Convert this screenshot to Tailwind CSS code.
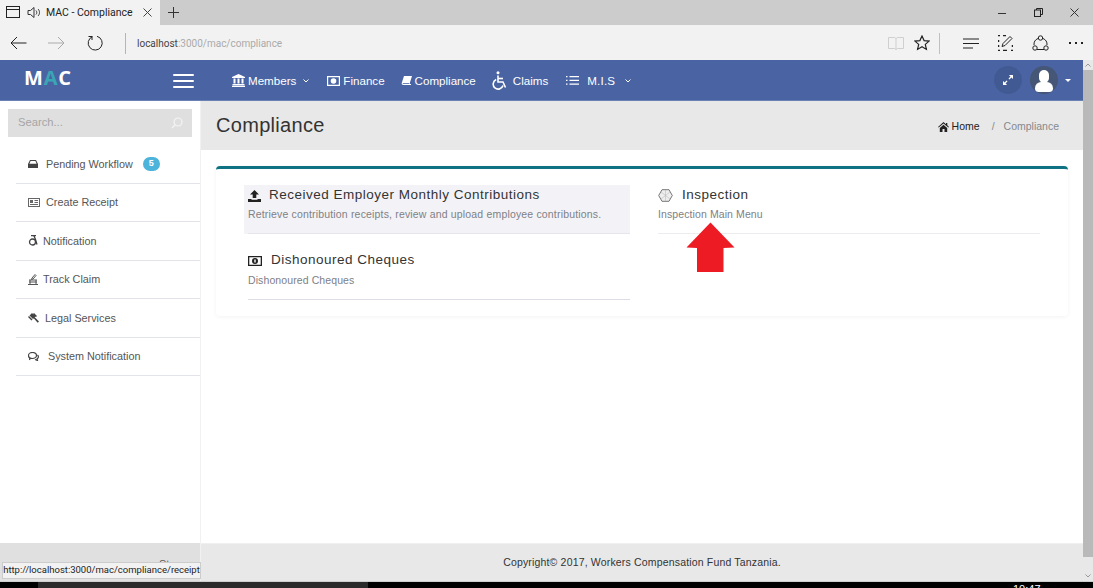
<!DOCTYPE html>
<html>
<head>
<meta charset="utf-8">
<title>MAC - Compliance</title>
<script src="https://cdn.jsdelivr.net/npm/@tailwindcss/browser@4"></script>
</head>
<body class="w-[1093px] h-[588px] overflow-hidden bg-white font-['Liberation_Sans',Arial,sans-serif]">
<div class="relative flex flex-col h-[588px]">

  <!-- Browser tabs -->
  <div class="flex h-[25px] bg-[#cccccc] shrink-0">
    <div class="flex items-center w-[160px] bg-[#f2f2f2] pl-[6px]">
      <svg class="w-[15px] h-[13px]" viewBox="0 0 15 13" fill="none" stroke="#222"><rect x="0.5" y="0.5" width="13" height="11"/><path d="M1 3.5h12"/></svg>
      <svg class="w-[15px] h-[13px] ml-[6px]" viewBox="0 0 15 13" fill="none" stroke="#333"><path d="M1 4.5h2.500L7 1.500v10L3.500 8.500H1z"/><path d="M9 4.500c1 1 1 3 0 4M11 3c2 2 2 5 0 7"/></svg>
      <span class="ml-[4px] mt-[1px] text-[10.500px] text-[#222] font-['Roboto',sans-serif] whitespace-nowrap">MAC - Compliance</span>
      <svg class="w-[9px] h-[9px] ml-auto mr-[8px]" viewBox="0 0 9 9" stroke="#444"><path d="M0.500 0.500l8 8M8.500 0.500l-8 8"/></svg>
    </div>
    <div class="w-[26px] flex items-center justify-center">
      <svg class="w-[11px] h-[11px]" viewBox="0 0 11 11" stroke="#333"><path d="M5.500 0v11M0 5.500h11"/></svg>
    </div>
    <div class="ml-auto flex items-center">
      <div class="w-[36px] flex justify-center"><svg class="w-[8px] h-[8px]" viewBox="0 0 8 8" stroke="#333"><path d="M0 4.500h8"/></svg></div>
      <div class="w-[36px] flex justify-center"><svg class="w-[9px] h-[9px]" viewBox="0 0 9 9" fill="none" stroke="#222"><rect x="0.500" y="2" width="6" height="6.500"/><path d="M2.500 2V0.500h6V6.500H6.500"/></svg></div>
      <div class="w-[37px] flex justify-center"><svg class="w-[9px] h-[9px]" viewBox="0 0 9 9" stroke="#333"><path d="M0.500 0.500l8 8M8.500 0.500l-8 8"/></svg></div>
    </div>
  </div>

  <!-- Browser toolbar -->
  <div class="flex items-center h-[35px] pt-[1px] bg-[#f2f2f2] shrink-0 pl-[10px]">
    <svg class="w-[17px] h-[14px]" viewBox="0 0 17 14" fill="none" stroke="#222"><path d="M16.500 7H1M7 1L1 7l6 6"/></svg>
    <svg class="w-[17px] h-[14px] ml-[21px]" viewBox="0 0 17 14" fill="none" stroke="#aaa"><path d="M0 7h15.500M10 1l6 6-6 6"/></svg>
    <svg class="w-[16px] h-[16px] ml-[22px]" viewBox="0 0 16 16" fill="none" stroke="#222"><path d="M5.500 1.600A7 7 0 1 0 10 1.300"/><path d="M5 5V1.500H1.500"/></svg>
    <div class="w-px h-[21px] bg-[#b5b5b5] ml-[22px]"></div>
    <div class="ml-[11px] mt-[1px] text-[10px] font-['Roboto',sans-serif] text-[#aaaaaa] whitespace-nowrap"><span class="text-[#444]">localhost</span>:3000/mac/compliance</div>
    <div class="ml-auto flex items-center">
      <svg class="w-[16px] h-[14px]" viewBox="0 0 16 14" fill="none" stroke="#cfcfcf"><path d="M0.500 1.500h6L8 2.500l1.500-1h6v11h-6L8 13.500l-1.500-1h-6zM8 2.500v11"/></svg>
      <svg class="w-[16px] h-[16px] ml-[10px]" viewBox="0 0 16 16" fill="none" stroke="#222" stroke-width="1.200"><path d="M8 1l2.100 4.600 5 .5-3.800 3.300 1.100 5L8 11.800l-4.400 2.600 1.100-5L.9 6.100l5-.5z"/></svg>
      <div class="w-px h-[21px] bg-[#c0c0c0] ml-[9px]"></div>
      <svg class="w-[16px] h-[11px] ml-[23px]" viewBox="0 0 16 11" stroke="#222"><path d="M0 1h16M0 5.500h16M0 10h10"/></svg>
      <svg class="w-[15px] h-[16px] ml-[19px]" viewBox="0 0 15 16" fill="none" stroke="#222"><path d="M0 .5h2M0 15.500h2M13 15.500h2M.5 5v2M.5 10v2M5 .5h3M5 15.500h4M14.500 10v2" stroke-width="1.500"/><path d="M4 11.500l1-3 7-7 2 2-7 7z"/></svg>
      <svg class="w-[17px] h-[17px] ml-[19px]" viewBox="0 0 17 17" fill="none" stroke="#222"><path d="M6 3.500A6.500 6.500 0 0 0 2 10M11 3.500A6.500 6.500 0 0 1 15 10M5 14.500h7"/><circle cx="8.500" cy="3" r="2.200"/><circle cx="3" cy="13" r="2.200"/><circle cx="14" cy="13" r="2.200"/></svg>
      <div class="flex gap-[4px] ml-[20px] mr-[10px]"><i class="w-[2px] h-[2px] bg-[#222]"></i><i class="w-[2px] h-[2px] bg-[#222]"></i><i class="w-[2px] h-[2px] bg-[#222]"></i></div>
    </div>
  </div>

  <!-- App area + scrollbar -->
  <div class="flex flex-1 min-h-0">
    <div class="flex flex-col w-[1083px] min-h-0">

      <!-- Top nav -->
      <header class="flex items-center h-[41px] bg-[#4a64a3] border-b border-[#6a81b5] shrink-0 text-white text-[11.600px]">
        <div class="w-[173px] pl-[24px] text-[20px] font-bold font-['Open_Sans',sans-serif] tracking-[0.8px] leading-none -mt-[4px]">M<span class="text-[#3aa6b4]">A</span>C</div>
        <div class="flex flex-col gap-[3.500px] w-[21px] mt-[2px]"><i class="h-[2.500px] bg-white rounded-sm"></i><i class="h-[2.500px] bg-white rounded-sm"></i><i class="h-[2.500px] bg-white rounded-sm"></i></div>
        <nav class="flex items-center ml-[38px] pt-[1px]">
          <svg class="w-[13px] h-[13px]" viewBox="0 0 13 13" fill="#fff"><path d="M6.500 0L13 3v1H0V3z"/><path d="M1.500 4.500h2v5h-2zM5.500 4.500h2v5h-2zM9.500 4.500h2v5h-2zM0.500 10h12v1.200H0.500zM0 11.700h13V13H0z"/></svg>
          <span class="ml-[3px]">Members</span>
          <svg class="w-[6px] h-[4px] ml-[7px]" viewBox="0 0 6 4" fill="none" stroke="#fff"><path d="M0.500 0.500L3 3l2.500-2.500"/></svg>
          <svg class="w-[13px] h-[10px] ml-[18px]" viewBox="0 0 13 10" fill="#fff"><path fill-rule="evenodd" d="M0 0h13v10H0zM1.200 1.200v7.600h10.600V1.200z"/><circle cx="6.500" cy="5" r="2.800"/></svg>
          <span class="ml-[3px]">Finance</span>
          <svg class="w-[11px] h-[10px] ml-[16px]" viewBox="0 0 11 10" fill="#fff"><path d="M3 0h8L8.500 8H10v1H2.500C1 9 .3 8 .8 6.800z"/><path d="M1.800 7.500H8" stroke="#4a64a3" stroke-width="0.800"/></svg>
          <span class="ml-[3px]">Compliance</span>
          <svg class="w-[16px] h-[19px] ml-[16px]" viewBox="0 0 16 19" fill="none" stroke="#fff" stroke-width="1.600"><circle cx="6" cy="1.800" r="1.500" fill="#fff" stroke="none"/><path d="M6 4.500v6.500h5l2.500 5.500"/><path d="M6 7.500h5"/><path d="M4.200 8.500a5 5 0 1 0 6.800 6"/></svg>
          <span class="ml-[5px]">Claims</span>
          <svg class="w-[13px] h-[9px] ml-[18px]" viewBox="0 0 13 9" fill="#fff"><path d="M0 0h1.500v1.200H0zM0 3.800h1.500V5H0zM0 7.600h1.500v1.200H0zM3.500 0H13v1.200H3.500zM3.500 3.800H13V5H3.500zM3.500 7.600H13v1.200H3.500z"/></svg>
          <span class="ml-[8px] tracking-[0.2px]">M.I.S</span>
          <svg class="w-[6px] h-[4px] ml-[10px]" viewBox="0 0 6 4" fill="none" stroke="#fff"><path d="M0.500 0.500L3 3l2.500-2.500"/></svg>
        </nav>
        <div class="ml-auto flex items-center pr-[12px]">
          <div class="flex items-center justify-center w-[28px] h-[28px] rounded-full bg-[#425a94]">
            <svg class="w-[10px] h-[10px]" viewBox="0 0 11 11" fill="#fff"><path d="M6.500 0H11v4.500L9.300 2.800 7 5 6 4l2.200-2.300zM4.500 11H0V6.500l1.700 1.700L4 6l1 1-2.200 2.300z"/></svg>
          </div>
          <div class="relative w-[28px] h-[28px] rounded-full bg-[#465677] ml-[8px] overflow-hidden">
            <div class="absolute left-[9px] top-[4px] w-[10px] h-[13px] rounded-full bg-white"></div>
            <div class="absolute left-[5px] top-[16px] w-[18px] h-[10px] rounded-t-[8px] rounded-b-[5px] bg-white"></div>
          </div>
          <div class="ml-[7px] w-0 h-0 border-x-[3px] border-x-transparent border-t-[3.500px] border-t-white"></div>
        </div>
      </header>

      <div class="flex flex-1 min-h-0">
        <!-- Sidebar -->
        <aside class="w-[201px] shrink-0 flex flex-col bg-white border-r border-[#f1f1f1] text-[10.800px] text-[#555]">
          <div class="flex flex-col flex-1 pt-[8px]">
            <div class="flex items-center justify-between h-[28px] mx-[8px] bg-[#dfdfdf] pl-[10px] pr-[9px] text-[11.200px] text-[#a5a5a5]">
              <span class="-mt-[1px]">Search...</span>
              <svg class="w-[12px] h-[12px]" viewBox="0 0 12 12" fill="none" stroke="#f4f4f4" stroke-width="1.200"><circle cx="7" cy="5" r="4"/><path d="M4 8l-3 3"/></svg>
            </div>
            <ul class="ml-[16px] mt-[8px]">
              <li class="flex items-center h-[38.500px] border-b border-[#e3e3ea] pl-[12px]">
                <svg class="w-[10px] h-[8px]" viewBox="0 0 10 8" fill="#444"><path d="M2 0h6l2 4v4H0V4zM2.600 1L1.400 3.700h7.200L7.400 1z"/></svg>
                <span class="ml-[8px]">Pending Workflow</span>
                <span class="ml-[10px] w-[17px] h-[14px] rounded-full bg-[#4cb3da] text-white text-[9px] font-bold flex items-center justify-center">5</span>
              </li>
              <li class="flex items-center h-[38.500px] border-b border-[#e3e3ea] pl-[12px]">
                <svg class="w-[12px] h-[9px]" viewBox="0 0 12 9" fill="#666"><path fill-rule="evenodd" d="M0 0h12v9H0zM1 1v7h10V1z"/><path d="M2 2h3v3H2zM6.500 2H10v1H6.500zM6.500 4H10v1H6.500zM2 6h8v1H2z"/></svg>
                <span class="ml-[6px]">Create Receipt</span>
              </li>
              <li class="flex items-center h-[38.500px] border-b border-[#e3e3ea] pl-[12px]">
                <svg class="w-[10px] h-[11px]" viewBox="0 0 10 11" fill="none" stroke="#444" stroke-width="1.300"><circle cx="4.500" cy="7" r="3"/><path d="M3 .7h5M6 1l1.500 3.500 1.500 5"/></svg>
                <span class="ml-[5px]">Notification</span>
              </li>
              <li class="flex items-center h-[38.500px] border-b border-[#e3e3ea] pl-[12px]">
                <svg class="w-[10px] h-[11px]" viewBox="0 0 10 11" fill="none" stroke="#555"><path d="M7 .5L4 4 3.500 5.500 5 5l3-3.500zM1 6h8M1 8h8M0 10.500h10M2 6v4.500M8 6v4.500"/></svg>
                <span class="ml-[5px]">Track Claim</span>
              </li>
              <li class="flex items-center h-[38.500px] border-b border-[#e3e3ea] pl-[12px]">
                <svg class="w-[11px] h-[10px]" viewBox="0 0 11 10" fill="#444"><path d="M4 0l3.500 3.500-2.500 2.500L1.500 2.500zM5.500 5l1-1 4.500 4.500-1.300 1.300zM0 4l1-1 3.500 3.500-1 1zM6 0L9 3l-1 1-3-3z"/></svg>
                <span class="ml-[6px]">Legal Services</span>
              </li>
              <li class="flex items-center h-[38.500px] border-b border-[#e3e3ea] pl-[12px]">
                <svg class="w-[11px] h-[9px]" viewBox="0 0 11 9" fill="none" stroke="#444" stroke-width="1.200"><ellipse cx="4.500" cy="3.500" rx="4" ry="3"/><path d="M2 6L1.500 8M9.500 3c1.500 1.500 1 3-.5 4l.5 1.500L7 7.500"/></svg>
                <span class="ml-[9px]">System Notification</span>
              </li>
            </ul>
          </div>
          <div class="relative h-[38px] bg-[#e0e0e0] shrink-0 overflow-hidden">
            <span class="absolute left-[159px] top-[13px] text-[11px] text-[#555]">St</span>
          </div>
        </aside>

        <!-- Content -->
        <div class="flex flex-col flex-1 min-w-0">
          <div class="flex items-center justify-between h-[49px] bg-[#e8e8e8] pl-[15px] pr-[24px] shrink-0">
            <h1 class="text-[20px] tracking-[0.3px] text-[#333] -mt-[2px]">Compliance</h1>
            <div class="flex items-center text-[10.500px] text-[#222] mt-[2px]">
              <svg class="w-[11px] h-[10px]" viewBox="0 0 11 10" fill="#222"><path d="M5.500 0L8 2.200V1h1.300v2.300L11 5l-.7.600-4.800-4.200L.7 5.600 0 5zM1.800 6l3.700-3.300L9.200 6v4H6.500V7h-2v3H1.800z"/></svg>
              <span class="ml-[3px]">Home</span>
              <span class="ml-[12px] text-[#888]">/</span>
              <span class="ml-[9px] text-[#85888e]">Compliance</span>
            </div>
          </div>
          <main class="flex-1 min-h-0 px-[15px] pt-[16px] bg-white">
            <section class="h-[150px] rounded-[4px] border-t-[3px] border-[#0f7282] shadow-[0_1px_4px_rgba(0,0,0,0.05)] bg-white grid grid-cols-[382px_382px] gap-x-[28px] content-start pl-[32px] pt-[16px]">
              <a class="block h-[49px] -ml-[4px] pl-[4px] bg-[#f3f3f7]">
                <div class="h-[49px] border-b border-[#e5e5ea]">
                  <div class="flex items-center h-[21px]">
                    <svg class="w-[13px] h-[12px]" viewBox="0 0 13 12" fill="#222"><path d="M6.500 0L11 4.500H8.300V8H4.700V4.500H2zM0 9h3.500v.8h6V9H13v3H0z"/></svg>
                    <span class="ml-[8px] text-[13.500px] tracking-[0.5px] text-[#333]">Received Employer Monthly Contributions</span>
                  </div>
                  <p class="mt-[1px] text-[10.500px] text-[#808085] tracking-[0.17px]">Retrieve contribution receipts, review and upload employee contributions.</p>
                </div>
              </a>
              <a class="block h-[49px] border-b border-[#ececf0]">
                <div class="flex items-center h-[21px]">
                  <svg class="w-[15px] h-[13px]" viewBox="0 0 15 13" fill="#eee" stroke="#777"><path d="M4 .7h7l3.300 5.800L11 12.300H4L.7 6.500z"/><path d="M3 3l9 7M12 3l-9 7M7.500 1v11" stroke="#bbb" stroke-width="0.600"/></svg>
                  <span class="ml-[9px] text-[13.500px] tracking-[0.5px] text-[#333]">Inspection</span>
                </div>
                <p class="mt-[1px] text-[10.500px] text-[#808085] tracking-[0.1px]">Inspection Main Menu</p>
              </a>
              <a class="block h-[50px] mt-[16px] border-b border-[#dcdce6]">
                <div class="flex items-center h-[21px]">
                  <svg class="w-[14px] h-[10px]" viewBox="0 0 14 10" fill="#222"><path fill-rule="evenodd" d="M0 0h14v10H0zM1.300 1.300v7.400h11.400V1.300z"/><path fill-rule="evenodd" d="M7 2a3 3 0 1 1 0 6 3 3 0 0 1 0-6zM6.300 3.500v3h1.400v-3z"/></svg>
                  <span class="ml-[9px] text-[13.500px] tracking-[0.5px] text-[#333]">Dishonoured Cheques</span>
                </div>
                <p class="mt-[2px] text-[10.500px] text-[#808085] tracking-[0.1px]">Dishonoured Cheques</p>
              </a>
            </section>
          </main>
          <footer class="flex items-center justify-center h-[38px] shrink-0 bg-[#e8e8e8] border-t border-[#efefef] text-[10.500px] text-[#333] tracking-[0.17px]">Copyright© 2017, Workers Compensation Fund Tanzania.</footer>
        </div>
      </div>
    </div>

    <!-- Scrollbar -->
    <div class="relative w-[10px] bg-[#e8e8e8] shrink-0">
      <svg class="absolute left-[2px] top-[3px] w-[6px] h-[4px]" viewBox="0 0 6 4" fill="none" stroke="#999"><path d="M0.500 3.500L3 1l2.500 2.500"/></svg>
      <div class="absolute left-0 right-0 top-[10px] bottom-[24px] bg-[#b9b9b9]"></div>
      <svg class="absolute left-[2px] bottom-[3px] w-[6px] h-[4px]" viewBox="0 0 6 4" fill="none" stroke="#999"><path d="M0.500 0.500L3 3l2.500-2.500"/></svg>
    </div>
  </div>

  <!-- Taskbar strip -->
  <div class="flex h-[7px] shrink-0 overflow-hidden bg-black border-t border-[#cfcfcf]">
    <div class="w-[38px]"></div>
    <div class="w-[330px] bg-[#2b2b2b]"></div>
    <span class="ml-[645px] text-[11px] leading-[14px] text-white">10:47</span>
  </div>

  <!-- Status tooltip -->
  <div class="absolute left-[2px] top-[562px] w-[199px] h-[17px] flex items-center justify-center bg-[#f2f2f2] border border-[#cccccc] text-[9.500px] text-[#222] font-['Roboto',sans-serif] whitespace-nowrap">http://localhost:3000/mac/compliance/receipt</div>

  <!-- Red annotation arrow -->
  <svg class="absolute left-[686px] top-[222px] w-[49px] h-[50px]" viewBox="0 0 49 50" fill="#ed1c24"><path d="M24.500 0.500L48.500 25.500L37.500 26V50H11V26L0.500 25.500Z"/></svg>
</div>
</body>
</html>
